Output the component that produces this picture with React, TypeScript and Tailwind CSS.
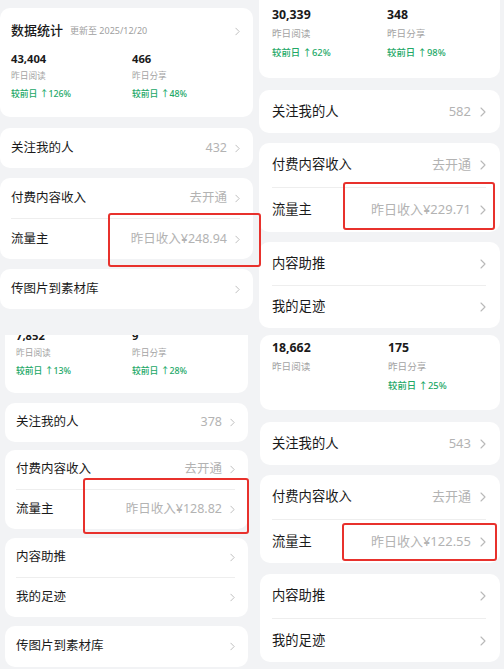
import clsx from "clsx";

type Size = "s" | "l";

const LABEL: Record<Size, string> = {
  s: "text-[12.5px]",
  l: "text-[13.3px]",
};

function Chevron({ size }: { size: Size }) {
  return (
    <svg
      viewBox="0 0 6 10"
      fill="none"
      stroke="#b9b9b9"
      strokeWidth={1.1}
      strokeLinecap="round"
      strokeLinejoin="round"
      className={clsx("shrink-0", size === "s" ? "h-[9px] w-[5px]" : "h-[10px] w-[6px]")}
    >
      <path d="M1 1l4 4-4 4" />
    </svg>
  );
}

function Row({
  label,
  value,
  size,
  h,
  divider,
}: {
  label: string;
  value?: string;
  size: Size;
  h: string;
  divider?: boolean;
}) {
  return (
    <div className={clsx("flex items-center justify-between", h, divider && "border-t border-[#eeeeee]")}>
      <span className={clsx("text-[#1a1a1a]", LABEL[size])}>{label}</span>
      <span className={clsx("flex items-center", size === "s" ? "gap-[8px]" : "gap-[9px]")}>
        {value && (
          <span className={clsx("text-[#b3b3b3]", size === "s" ? "text-[12.5px]" : "text-[13px]")}>{value}</span>
        )}
        <Chevron size={size} />
      </span>
    </div>
  );
}

function Stat({
  num,
  label,
  delta,
  size,
}: {
  num: string;
  label: string;
  delta?: string;
  size: Size;
}) {
  const big = size === "l";
  return (
    <div>
      <div
        className={clsx(
          "font-bold text-[#1a1a1a]",
          big ? "h-[17px] text-[12.3px] leading-[17px]" : "h-[15px] text-[11.2px] leading-[15px]"
        )}
      >
        {num}
      </div>
      <div
        className={clsx(
          "text-[#a3a3a3]",
          big ? "mt-[4px] h-[13px] text-[9.6px] leading-[13px]" : "mt-[4px] h-[12px] text-[8.7px] leading-[12px]"
        )}
      >
        {label}
      </div>
      {delta && (
        <div
          className={clsx(
            "font-medium text-[#22a867]",
            big ? "mt-[6px] h-[13px] text-[9.4px] leading-[13px]" : "mt-[6px] h-[12px] text-[8.8px] leading-[12px]"
          )}
        >
          {delta}
        </div>
      )}
    </div>
  );
}

function RedBox({ className }: { className: string }) {
  return <div className={clsx("absolute z-10 rounded-[3px] border-2 border-[#e8312c]", className)} />;
}

function TopLeft() {
  return (
    <div className="relative flex h-[335px] flex-col bg-[#f2f3f5]">
      <div className="mt-[8px] h-[109px] w-[253px] rounded-[10px] bg-white pt-[14px] pr-[13px] pl-[11px]">
        <div className="flex h-[18px] items-center">
          <span className="text-[13px] font-medium text-[#1a1a1a]">数据统计</span>
          <span className="ml-[7px] text-[9px] text-[#a0a0a0]">更新至 2025/12/20</span>
          <span className="ml-auto">
            <Chevron size="s" />
          </span>
        </div>
        <div className="mt-[11px] grid grid-cols-[121px_1fr]">
          <Stat size="s" num="43,404" label="昨日阅读" delta="较前日 ↑126%" />
          <Stat size="s" num="466" label="昨日分享" delta="较前日 ↑48%" />
        </div>
      </div>
      <div className="mt-[11px] w-[253px] rounded-[10px] bg-white pr-[13px] pl-[11px]">
        <Row size="s" h="h-[40px]" label="关注我的人" value="432" />
      </div>
      <div className="mt-[10px] w-[253px] rounded-[10px] bg-white pr-[13px] pl-[11px]">
        <Row size="s" h="h-[40px]" label="付费内容收入" value="去开通" />
        <Row size="s" h="h-[41px]" divider label="流量主" value="昨日收入¥248.94" />
      </div>
      <div className="mt-[10px] w-[253px] rounded-[10px] bg-white pr-[13px] pl-[11px]">
        <Row size="s" h="h-[40px]" label="传图片到素材库" />
      </div>
      <RedBox className="top-[213px] left-[108px] h-[54px] w-[153px]" />
    </div>
  );
}

function BottomLeft() {
  return (
    <div className="relative flex h-[334px] flex-col bg-[#f2f3f5] pl-[5px]">
      <div className="h-[58px] w-[243px] overflow-hidden rounded-b-[10px] bg-white pr-[13px] pl-[11px]">
        <div className="mt-[-7px] grid grid-cols-[116px_1fr]">
          <Stat size="s" num="7,852" label="昨日阅读" delta="较前日 ↑13%" />
          <Stat size="s" num="9" label="昨日分享" delta="较前日 ↑28%" />
        </div>
      </div>
      <div className="mt-[10px] w-[243px] rounded-[10px] bg-white pr-[13px] pl-[11px]">
        <Row size="s" h="h-[39px]" label="关注我的人" value="378" />
      </div>
      <div className="mt-[8px] w-[243px] rounded-[10px] bg-white pr-[13px] pl-[11px]">
        <Row size="s" h="h-[39px]" label="付费内容收入" value="去开通" />
        <Row size="s" h="h-[40px]" divider label="流量主" value="昨日收入¥128.82" />
      </div>
      <div className="mt-[9px] w-[243px] rounded-[10px] bg-white pr-[13px] pl-[11px]">
        <Row size="s" h="h-[39px]" label="内容助推" />
        <Row size="s" h="h-[40px]" divider label="我的足迹" />
      </div>
      <div className="mt-[9px] w-[243px] rounded-[10px] bg-white pr-[13px] pl-[11px]">
        <Row size="s" h="h-[41px]" label="传图片到素材库" />
      </div>
      <RedBox className="top-[143px] left-[83px] h-[56px] w-[166px]" />
    </div>
  );
}

function TopRight() {
  return (
    <div className="relative flex h-[333px] flex-col bg-[#f2f3f5] pl-[4px]">
      <div className="h-[78px] w-[241px] rounded-b-[10px] bg-white pt-[6px] pr-[14px] pl-[13px]">
        <div className="grid grid-cols-[115px_1fr]">
          <Stat size="l" num="30,339" label="昨日阅读" delta="较前日 ↑62%" />
          <Stat size="l" num="348" label="昨日分享" delta="较前日 ↑98%" />
        </div>
      </div>
      <div className="mt-[12px] w-[241px] rounded-[10px] bg-white pr-[14px] pl-[13px]">
        <Row size="l" h="h-[43px]" label="关注我的人" value="582" />
      </div>
      <div className="mt-[10px] w-[241px] rounded-[10px] bg-white pr-[14px] pl-[13px]">
        <Row size="l" h="h-[44px]" label="付费内容收入" value="去开通" />
        <Row size="l" h="h-[45px]" divider label="流量主" value="昨日收入¥229.71" />
      </div>
      <div className="mt-[10px] w-[241px] rounded-[10px] bg-white pr-[14px] pl-[13px]">
        <Row size="l" h="h-[43px]" label="内容助推" />
        <Row size="l" h="h-[43px]" divider label="我的足迹" />
      </div>
      <RedBox className="top-[182px] left-[88px] h-[48px] w-[152px]" />
    </div>
  );
}

function BottomRight() {
  return (
    <div className="relative flex h-[336px] flex-col bg-[#f2f3f5] pl-[5px]">
      <div className="mt-[2px] h-[75px] w-[240px] rounded-[10px] bg-white pt-[4px] pr-[14px] pl-[12px]">
        <div className="grid grid-cols-[116px_1fr]">
          <Stat size="l" num="18,662" label="昨日阅读" />
          <Stat size="l" num="175" label="昨日分享" delta="较前日 ↑25%" />
        </div>
      </div>
      <div className="mt-[12px] w-[240px] rounded-[10px] bg-white pr-[14px] pl-[12px]">
        <Row size="l" h="h-[43px]" label="关注我的人" value="543" />
      </div>
      <div className="mt-[10px] w-[240px] rounded-[10px] bg-white pr-[14px] pl-[12px]">
        <Row size="l" h="h-[44px]" label="付费内容收入" value="去开通" />
        <Row size="l" h="h-[44px]" divider label="流量主" value="昨日收入¥122.55" />
      </div>
      <div className="mt-[11px] w-[240px] rounded-[10px] bg-white pr-[14px] pl-[12px]">
        <Row size="l" h="h-[44px]" label="内容助推" />
        <Row size="l" h="h-[44px]" divider label="我的足迹" />
      </div>
      <RedBox className="top-[190px] left-[87px] h-[38px] w-[155px]" />
    </div>
  );
}

export default function App() {
  return (
    <div className="grid h-[669px] w-[504px] grid-cols-[255px_249px] overflow-hidden bg-[#f2f3f5] font-['Noto_Sans','Noto_Sans_CJK_SC',sans-serif]">
      <div className="flex flex-col">
        <TopLeft />
        <BottomLeft />
      </div>
      <div className="flex flex-col">
        <TopRight />
        <BottomRight />
      </div>
    </div>
  );
}
